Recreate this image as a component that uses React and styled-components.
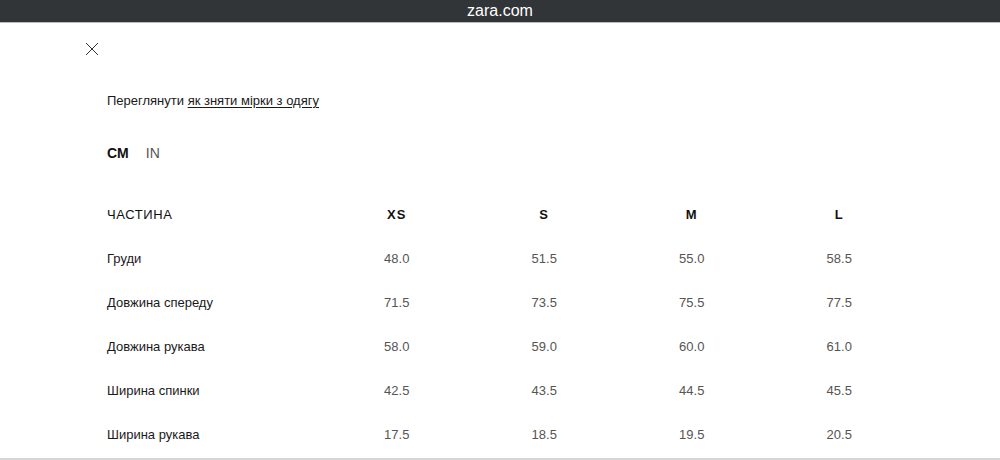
import styled, { createGlobalStyle } from "styled-components";

const GlobalStyle = createGlobalStyle`
  html, body {
    margin: 0;
    padding: 0;
    background: #fff;
  }
  body {
    font-family: "Liberation Sans", Arial, sans-serif;
    color: #1a1a1a;
  }
`;

const Window = styled.div`
  height: 460px;
  box-sizing: border-box;
  display: flex;
  flex-direction: column;
  overflow: hidden;
  border-bottom: 2px solid #d6d6d6;
`;

const AddressBar = styled.header`
  height: 22px;
  flex-shrink: 0;
  background: #323537;
  border-bottom: 1px solid #b9bcbe;
  color: #fff;
  font-size: 16px;
  display: flex;
  align-items: center;
  justify-content: center;
`;

const Sheet = styled.main`
  flex: 1;
  overflow: hidden;
  padding: 19px 0 0 107px;
  position: relative;
`;

const CloseButton = styled.button`
  display: block;
  margin-left: -22px;
  width: 14px;
  height: 14px;
  padding: 0;
  border: 0;
  background: none;
  cursor: pointer;
`;

const Intro = styled.p`
  margin: 37px 0 0;
  font-size: 13px;
  line-height: 16px;
`;

const GuideLink = styled.a`
  color: #1a1a1a;
  text-decoration: underline;
  text-underline-offset: 2px;
`;

const Units = styled.div`
  margin-top: 36px;
  display: flex;
  gap: 17px;
  font-size: 14px;
  line-height: 16px;
`;

const Unit = styled.span`
  font-weight: ${(p) => (p.$active ? 700 : 400)};
  color: ${(p) => (p.$active ? "#111" : "#555")};
`;

const Table = styled.div`
  margin-top: 31px;
  display: grid;
  grid-template-columns: 216px repeat(4, 147.5px);
  grid-auto-rows: 44px;
`;

const Cell = styled.div`
  display: flex;
  align-items: center;
  justify-content: ${(p) => (p.$label ? "flex-start" : "center")};
  font-size: 13px;
  color: ${(p) => (p.$label ? "#1a1a1a" : "#555")};
`;

const HeadCell = styled(Cell)`
  color: #111;
  letter-spacing: ${(p) => (p.$label ? "0.6px" : "1.2px")};
  font-weight: ${(p) => (p.$label ? 400 : 700)};
`;

const sizes = ["XS", "S", "M", "L"];

const rows = [
  ["Груди", "48.0", "51.5", "55.0", "58.5"],
  ["Довжина спереду", "71.5", "73.5", "75.5", "77.5"],
  ["Довжина рукава", "58.0", "59.0", "60.0", "61.0"],
  ["Ширина спинки", "42.5", "43.5", "44.5", "45.5"],
  ["Ширина рукава", "17.5", "18.5", "19.5", "20.5"],
];

const CloseIcon = () => (
  <svg width="14" height="14" viewBox="0 0 14 14">
    <path d="M1 1L13 13M13 1L1 13" stroke="#333" strokeWidth="1" fill="none" />
  </svg>
);

export default function App() {
  return (
    <>
      <GlobalStyle />
      <Window>
        <AddressBar>zara.com</AddressBar>
        <Sheet>
          <CloseButton aria-label="Закрити">
            <CloseIcon />
          </CloseButton>
          <Intro>
            Переглянути <GuideLink href="#">як зняти мірки з одягу</GuideLink>
          </Intro>
          <Units>
            <Unit $active>CM</Unit>
            <Unit>IN</Unit>
          </Units>
          <Table>
            <HeadCell $label>ЧАСТИНА</HeadCell>
            {sizes.map((s) => (
              <HeadCell key={s}>{s}</HeadCell>
            ))}
            {rows.map((r) =>
              r.map((v, i) => (
                <Cell key={r[0] + i} $label={i === 0}>
                  {v}
                </Cell>
              ))
            )}
          </Table>
        </Sheet>
      </Window>
    </>
  );
}
